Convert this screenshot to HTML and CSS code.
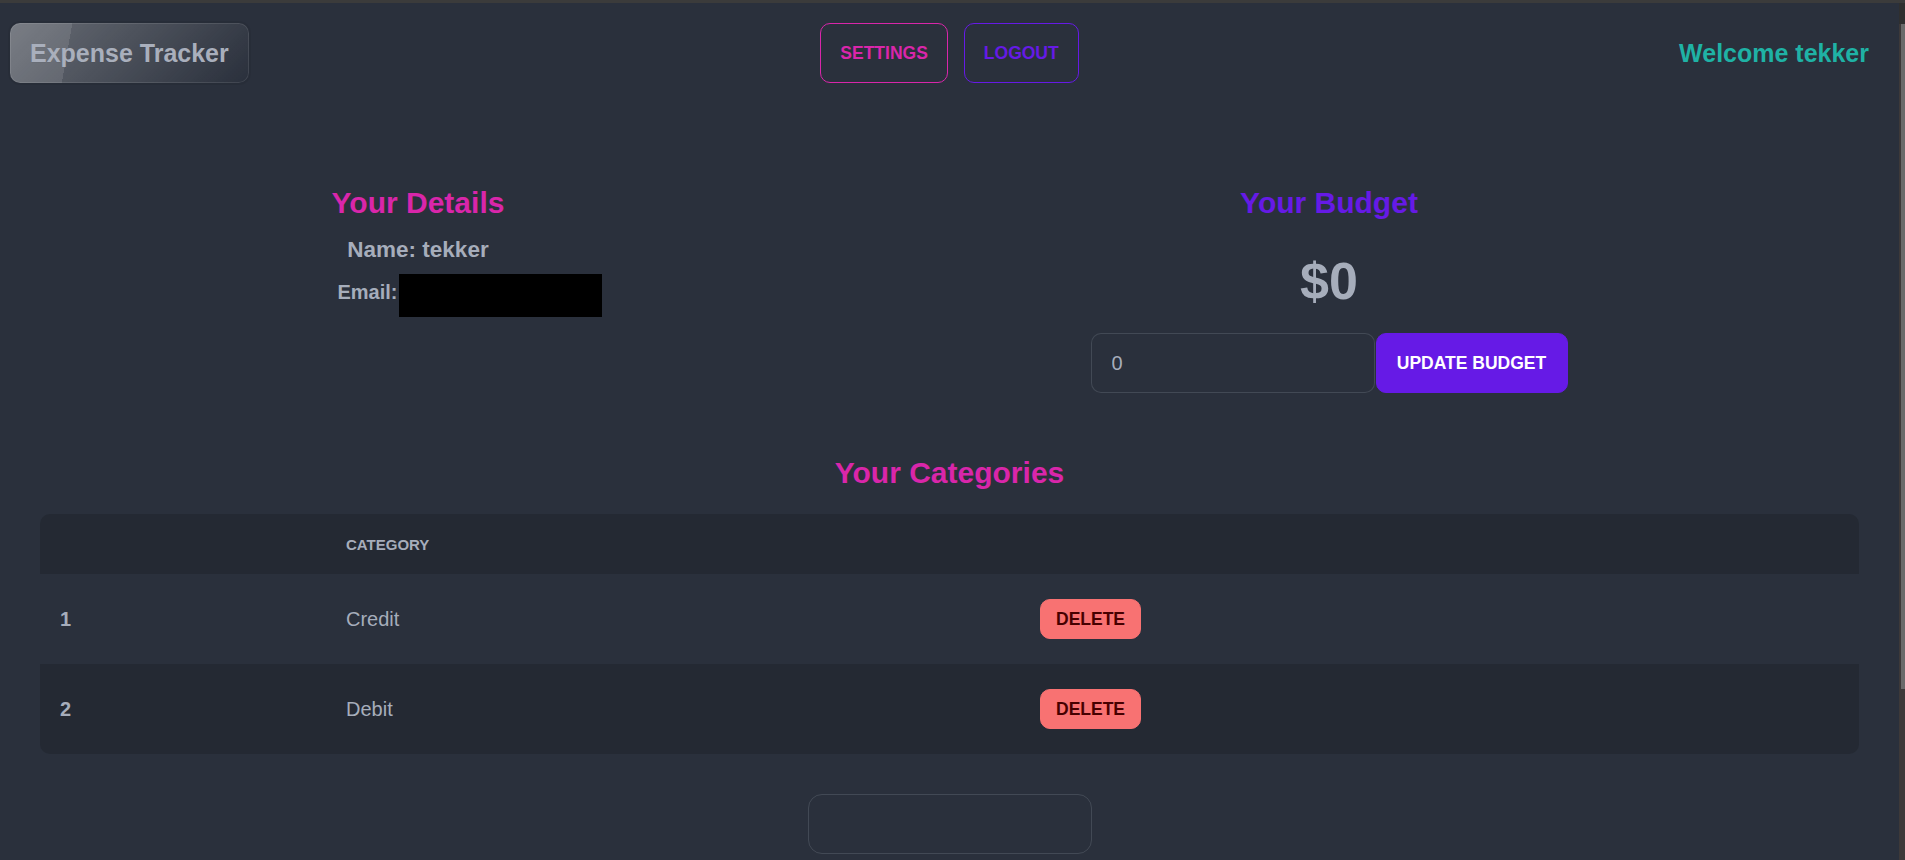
FILE: index.html
```html
<!DOCTYPE html>
<html lang="en">
<head>
<meta charset="utf-8">
<title>Expense Tracker</title>
<link rel="stylesheet" href="styles.css">
</head>
<body>
<div class="chrome-strip"></div>
<div class="window">
<div class="app">
  <nav class="navbar">
    <div class="nav-start"><a class="btn btn-glass">Expense Tracker</a></div>
    <div class="nav-center">
      <button class="btn btn-outline btn-outline-secondary">Settings</button>
      <button class="btn btn-outline btn-outline-primary">Logout</button>
    </div>
    <div class="nav-end"><span class="welcome">Welcome tekker</span></div>
  </nav>

  <section class="stats">
    <div class="details">
      <h2 class="title title-secondary">Your Details</h2>
      <p class="name">Name: tekker</p>
      <div class="email-row"><span class="email-label">Email:</span><span class="redact"><span class="redact-box"></span></span></div>
    </div>
    <div class="budget">
      <h2 class="title title-primary">Your Budget</h2>
      <div class="amount">$0</div>
      <div class="budget-form">
        <input class="input" type="text" value="0">
        <button class="btn btn-fill-primary">Update Budget</button>
      </div>
    </div>
  </section>

  <section class="categories">
    <h2 class="title title-secondary cat-title">Your Categories</h2>
    <div class="table-wrap">
      <table class="table">
        <thead>
          <tr><th class="col-num"></th><th class="col-name">Category</th><th></th></tr>
        </thead>
        <tbody>
          <tr class="row-odd"><th class="col-num">1</th><td>Credit</td><td><button class="btn btn-delete">Delete</button></td></tr>
          <tr class="row-even"><th class="col-num">2</th><td>Debit</td><td><button class="btn btn-delete">Delete</button></td></tr>
        </tbody>
      </table>
    </div>
  </section>

  <div class="bottom">
    <div class="bottom-box"></div>
  </div>
</div>
<div class="scrollbar">
  <div class="sb-button"></div>
  <div class="sb-thumb"></div>
</div>
</div>
</body>
</html>
```

FILE: styles.css
```css
html, body {
  margin: 0;
  padding: 0;
}
body {
  background: #2a303c;
  font-family: "Liberation Sans", Arial, sans-serif;
  overflow: hidden;
}
.chrome-strip {
  height: 3px;
  background: #3b3b3b;
}
.window {
  display: flex;
  height: 857px;
}
.app {
  flex: 1;
  min-width: 0;
  overflow: hidden;
  background: #2a303c;
  color: #a6adbb;
}
.scrollbar {
  width: 6px;
  display: flex;
  flex-direction: column;
  background: #3d3939;
}
.sb-button {
  height: 21px;
  background: #2f2f2f;
}
.sb-thumb {
  height: 665px;
  margin-left: 2px;
  background: #6a6a6a;
}

/* buttons */
.btn {
  display: inline-flex;
  align-items: center;
  justify-content: center;
  box-sizing: border-box;
  height: 60px;
  padding: 0 20px;
  border: 1px solid transparent;
  border-radius: 10px;
  font-family: "Liberation Sans", Arial, sans-serif;
  font-size: 17.5px;
  font-weight: 700;
  text-transform: uppercase;
  background: transparent;
  cursor: pointer;
  white-space: nowrap;
}
.btn-glass {
  text-transform: none;
  font-size: 25px;
  color: #a9afbc;
  border: none;
  background-image:
    linear-gradient(135deg, rgba(255,255,255,0.3) 0%, rgba(0,0,0,0) 100%),
    linear-gradient(100deg, rgba(255,255,255,0.1) 25%, rgba(0,0,0,0) 25%);
  box-shadow: inset 0 0 0 1px rgba(255,255,255,0.1), 0 0 0 2px rgba(0,0,0,0.05);
  text-shadow: 0 1px rgba(0,0,0,0.05);
}
.btn-outline {
  padding: 0 19px;
}
.btn-outline-secondary {
  border-color: #d926aa;
  color: #d926aa;
}
.btn-outline-primary {
  border-color: #661ae6;
  color: #661ae6;
}
.btn-fill-primary {
  background: #661ae6;
  border-color: #661ae6;
  color: #ffffff;
  width: 192px;
  margin-left: 1px;
}
.btn-delete {
  height: 40px;
  padding: 0 15px;
  background: #f87272;
  border-color: #f87272;
  color: #470000;
}

/* navbar */
.navbar {
  display: grid;
  grid-template-columns: 1fr auto 1fr;
  align-items: center;
  height: 60px;
  padding: 20px 10px 0;
}
.nav-start {
  display: flex;
}
.nav-center {
  display: flex;
  gap: 16px;
}
.nav-end {
  display: flex;
  justify-content: flex-end;
}
.welcome {
  padding: 0 20px;
  font-size: 25px;
  font-weight: 700;
  color: #1fb2a5;
}

/* stats */
.stats {
  display: grid;
  grid-template-columns: 836px 986px;
  margin-top: 100px;
  text-align: center;
}
.title {
  margin: 0;
  font-size: 30px;
  line-height: 40px;
  font-weight: 700;
}
.title-secondary {
  color: #d926aa;
}
.title-primary {
  color: #661ae6;
}
.name {
  margin: 9px 0 0;
  font-size: 22.5px;
  line-height: 35px;
  font-weight: 700;
}
.email-row {
  display: flex;
  justify-content: center;
  height: 30px;
  margin-top: 10px;
  font-size: 20px;
  line-height: 30px;
  font-weight: 700;
}
.redact {
  position: relative;
  display: block;
  width: 101px;
  height: 30px;
}
.redact-box {
  position: absolute;
  left: 1px;
  top: -3px;
  width: 203px;
  height: 43px;
  background: #000000;
}
.budget {
  display: flex;
  flex-direction: column;
  align-items: center;
}
.amount {
  margin-top: 32px;
  font-size: 52px;
  line-height: 52px;
  font-weight: 700;
}
.budget-form {
  display: flex;
  margin-top: 26px;
}
.input {
  box-sizing: border-box;
  width: 284px;
  height: 60px;
  padding: 0 20px;
  border: 1px solid rgba(166,173,187,0.2);
  border-radius: 10px;
  background: #2a303c;
  color: #a6adbb;
  font-family: "Liberation Sans", Arial, sans-serif;
  font-size: 20px;
  outline: none;
}

/* categories */
.categories {
  margin-top: 60px;
  padding: 0 40px;
}
.cat-title {
  text-align: center;
  margin-bottom: 21px;
}
.table-wrap {
  border-radius: 10px;
  overflow: hidden;
}
.table {
  width: 100%;
  border-collapse: collapse;
  border-spacing: 0;
  text-align: left;
}
.table thead th {
  height: 60px;
  padding: 0 20px;
  background: #242933;
  font-size: 15px;
  font-weight: 700;
  text-transform: uppercase;
  color: #a6adbb;
}
.table tbody th,
.table tbody td {
  height: 90px;
  padding: 0 20px;
  font-size: 20px;
  color: #a6adbb;
}
.table tbody th {
  font-weight: 700;
}
.table tbody td {
  font-weight: 400;
}
.col-num {
  width: 246px;
}
.col-name {
  width: 654px;
}
.row-odd th,
.row-odd td {
  background: #2a303c;
}
.row-even th,
.row-even td {
  background: #242933;
}

/* bottom */
.bottom {
  display: flex;
  justify-content: center;
  margin-top: 40px;
  padding-bottom: 226px;
}
.bottom-box {
  box-sizing: border-box;
  width: 284px;
  height: 60px;
  border: 1px solid rgba(166,173,187,0.2);
  border-radius: 14px;
}
```
